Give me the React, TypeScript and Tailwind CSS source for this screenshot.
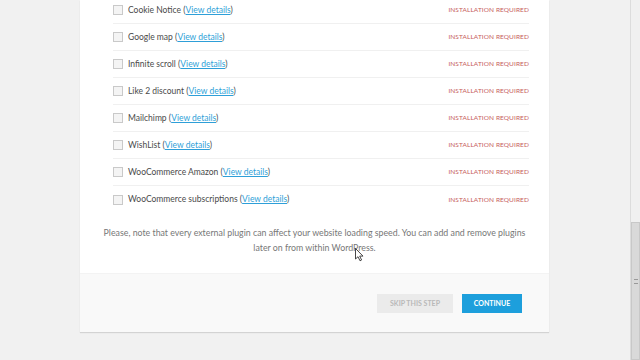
import React from "react";

const plugins = [
  "Cookie Notice",
  "Google map",
  "Infinite scroll",
  "Like 2 discount",
  "Mailchimp",
  "WishList",
  "WooCommerce Amazon",
  "WooCommerce subscriptions",
];

const PluginRow: React.FC<{ name: string; last: boolean }> = ({ name, last }) => (
  <div
    className={`flex items-center justify-between h-[27px] ${
      last ? "" : "border-b border-[#f0f0f0]"
    }`}
  >
    <div className="flex items-center">
      <span className="w-[10px] h-[10px] border border-[#c9c9c9] bg-[#f4f4f4] mr-[5px]" />
      <span className="text-[8.5px] text-[#4a4a4a]">
        {name} (
        <a className="text-[#2e9fd8] underline underline-offset-1">View details</a>)
      </span>
    </div>
    <span className="text-[6.5px] text-[#c65b5b] tracking-[0.1px]">INSTALLATION REQUIRED</span>
  </div>
);

const App: React.FC = () => {
  return (
    <div
      className="relative w-[640px] h-[360px] overflow-hidden bg-[#f1f1f1] flex"
      style={{ fontFamily: "Lato, 'Open Sans', sans-serif" }}
    >
      <div className="flex-1 flex justify-start pl-[80px]">
        <div className="w-[469px] h-[332px] bg-white flex flex-col shadow-[0_1px_1px_rgba(0,0,0,0.12)]">
          <div className="flex-1 flex flex-col">
            <div className="ml-[33px] mr-[20px] -mt-[3px]">
              {plugins.map((p, i) => (
                <PluginRow key={p} name={p} last={i === plugins.length - 1} />
              ))}
            </div>
            <p className="mt-[12px] px-[10px] text-center text-[8.8px] leading-[15px] text-[#777]">
              Please, note that every external plugin can affect your website loading speed. You can add and
              remove plugins
              <br />
              later on from within WordPress.
            </p>
          </div>
          <div className="h-[59px] bg-[#f9f9f9] border-t border-[#f3f3f3] flex items-center justify-end gap-[9px] pr-[27px]">
            <button className="w-[76px] h-[19px] bg-[#ebebeb] text-[#b9b9b9] text-[7px] font-bold">
              SKIP THIS STEP
            </button>
            <button className="w-[60px] h-[19px] bg-[#1d9fdc] text-white text-[7px] font-bold">
              CONTINUE
            </button>
          </div>
        </div>
      </div>
      <div className="w-[10px] border-l border-[#dcdcdc] bg-[#f0f0f0] flex flex-col">
        <div className="h-[222px]" />
        <div className="flex-1 bg-[#d9d9d9] border border-[#c8c8c8] flex items-center justify-center pb-[20px]">
          <span className="w-[4px] h-[5px] border-y border-[#999]" />
        </div>
      </div>
      <svg
        className="absolute left-[355px] top-[248px]"
        width="9"
        height="14"
        viewBox="0 0 9 14"
      >
        <path d="M0.5 0.5 L0.5 11 L3 8.7 L5 12.8 L6.6 12 L4.7 8.1 L8 8.1 Z" fill="#fff" stroke="#333" strokeWidth="0.9" />
      </svg>
    </div>
  );
};

export default App;
